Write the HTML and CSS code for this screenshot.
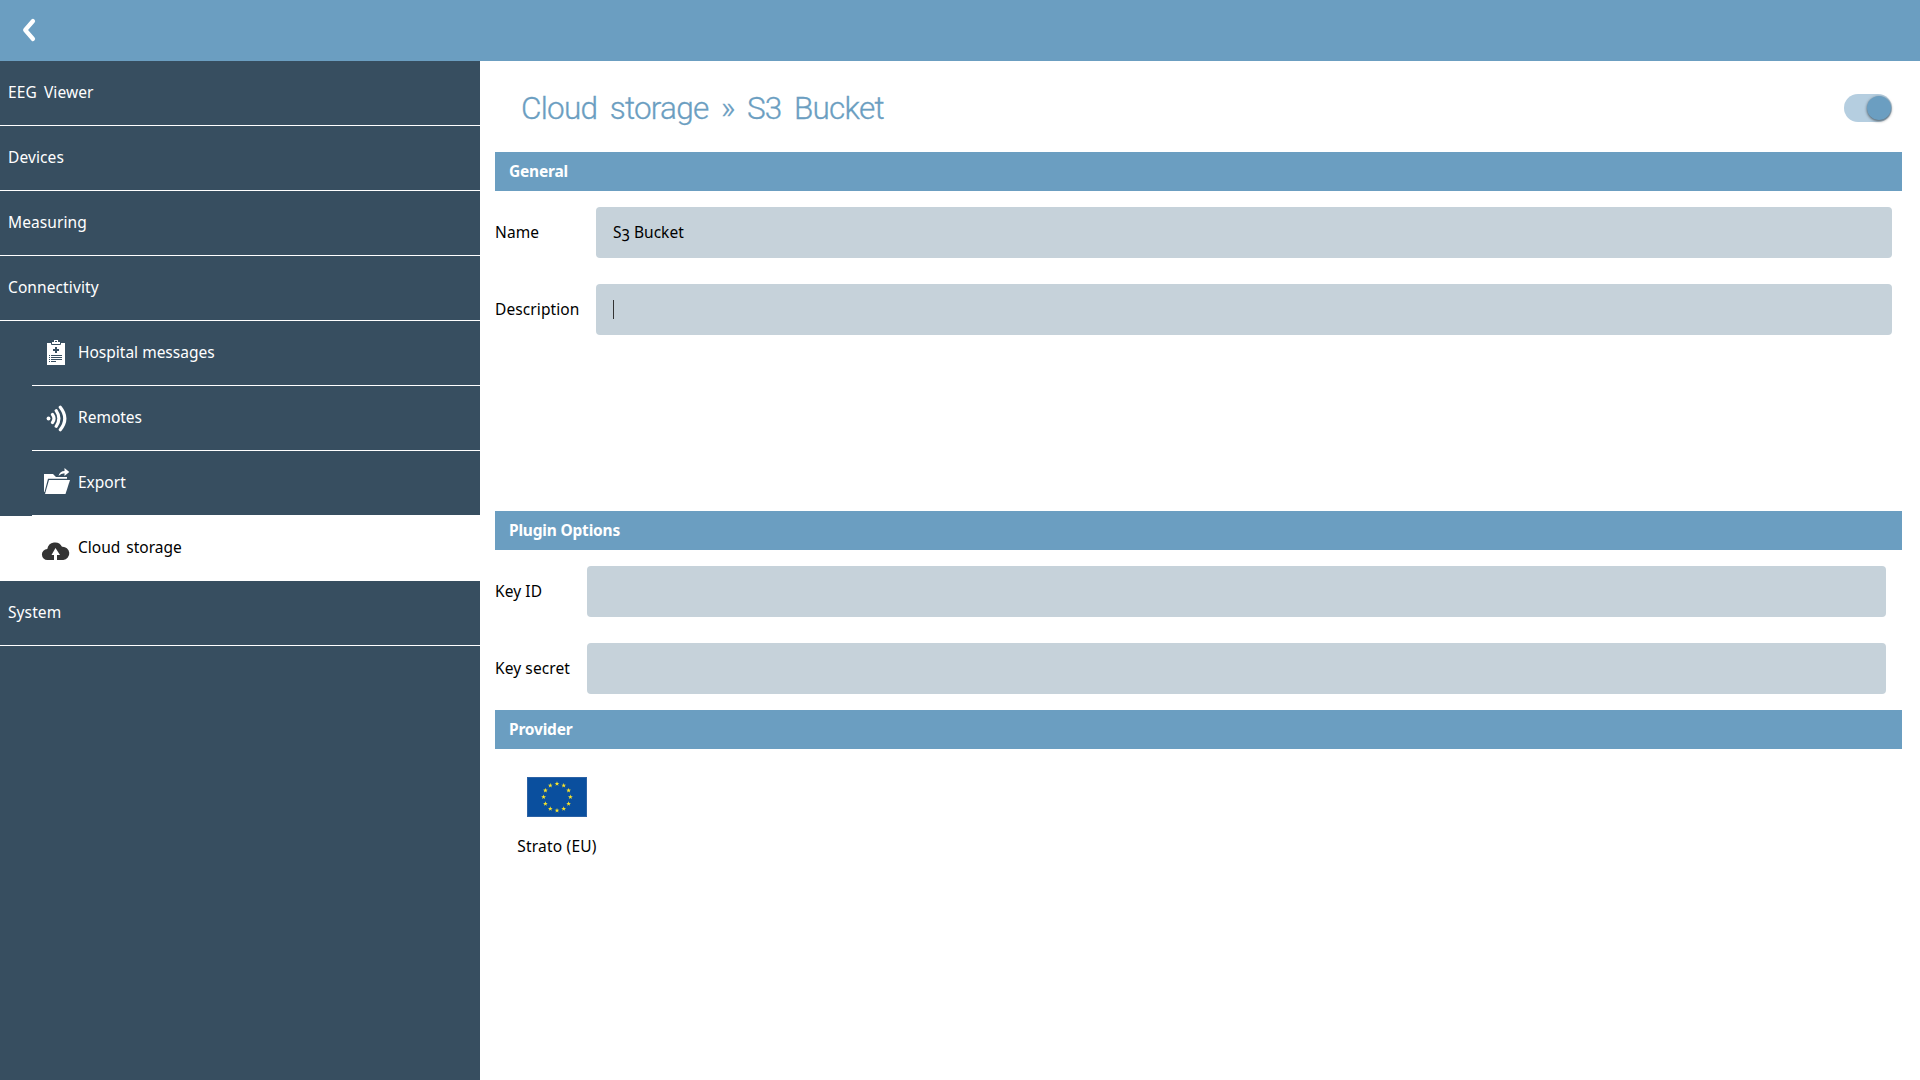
FILE: index.html
```
<!DOCTYPE html>
<html lang="en">
    <head>
        <meta charset="UTF-8">
        <title>Cloud storage</title>
        <link rel="stylesheet" href="styles.css">
    </head>
    <body>
        <header class="topbar">
            <svg class="back" width="16" height="26" viewBox="0 0 16 26">
                <path d="M12 4 L4.200 13 L12 22" fill="none" stroke="#fff" stroke-width="4.200" stroke-linecap="round" stroke-linejoin="round"/>
            </svg>
        </header>
        <div class="layout">
            <ul class="menu">
                <li>EEG Viewer</li>
                <li>Devices</li>
                <li>Measuring</li>
                <li>Connectivity</li>
                <li class="sub">
                    <div class="sub-item">
                        <svg class="icon" width="30" height="30" viewBox="0 0 30 30">
                            <path d="M6 6h5V5h2V3h4v2h2v1h5v22H6z" fill="#fff"/>
                            <path d="M10.500 6v1.500h9V6M14 4.500h2" fill="none" stroke="#374e60"/>
                            <path d="M15 10v6M12 13h6" stroke="#374e60" stroke-width="2"/>
                            <path d="M8 18.500h1M10 18.500h11M8 20.500h1M10 20.500h11M8 22.500h1M10 22.500h11M8 24.500h1M10 24.500h5" stroke="#374e60"/>
                        </svg>
                        <span>Hospital messages</span>
                    </div>
                </li>
                <li class="sub">
                    <div class="sub-item">
                        <svg class="icon" width="30" height="30" viewBox="0 0 30 30">
                            <circle cx="7.500" cy="16.500" r="1.900" fill="#fff"/>
                            <path d="M11.500 12.500q3 4 0 8M15.200 8.700q5.400 7.800 0 15.600M19.300 5.300q9 11.200 0 22.400" fill="none" stroke="#fff" stroke-width="3.200" stroke-linecap="round"/>
                        </svg>
                        <span>Remotes</span>
                    </div>
                </li>
                <li class="sub">
                    <div class="sub-item">
                        <svg class="icon" width="30" height="30" viewBox="0 0 30 30">
                            <path d="M3 7h9l3 3h11v1.700H7L3.500 25H3z" fill="#fff"/>
                            <path d="M8 13h21l-4.500 14H4z" fill="#fff"/>
                            <path d="M17.500 9q1.500-5 6-5V1l4.800 4-4.800 4V6.200q-3.500 0-6 2.800z" fill="#fff"/>
                        </svg>
                        <span>Export</span>
                    </div>
                </li>
                <li class="sub active">
                    <div class="sub-item">
                        <svg class="icon" width="30" height="30" viewBox="0 0 30 30">
                            <path d="M6.500 28A5.500 5.500 0 0 1 6.300 17 7.800 7.800 0 0 1 21 14.800 6.600 6.600 0 0 1 22.300 28H16V23H19L14.500 16 10.500 23H13V28z" fill="#333"/>
                        </svg>
                        <span>Cloud storage</span>
                    </div>
                </li>
                <li>System</li>
            </ul>
            <main class="content">
                <div class="heading">
                    <h1>Cloud storage » S3 Bucket</h1>
                    <div class="toggle"><div class="knob"></div></div>
                </div>
                <h2>General</h2>
                <div class="fields general">
                    <label>Name</label>
                    <div class="field">S3 Bucket</div>
                    <label>Description</label>
                    <div class="field"><span class="caret"></span></div>
                </div>
                <h2>Plugin Options</h2>
                <div class="fields plugin">
                    <label>Key ID</label>
                    <div class="field"></div>
                    <label>Key secret</label>
                    <div class="field"></div>
                </div>
                <h2>Provider</h2>
                <div class="provider">
                    <svg class="flag" width="60" height="40" viewBox="0 0 60 40">
                        <defs>
                            <path id="star" fill="#f8e32b" d="M0-2.500L.6-.8 2.400-.77 .95.300 1.500 2 0 1-1.500 2-.95.300-2.400-.77-.6-.8z"/>
                        </defs>
                        <rect width="60" height="40" fill="#2c62a5"/>
                        <rect x="1" y="1" width="58" height="38" fill="#0a4f9e"/>
                        <use href="#star" x="30" y="6.700"/>
                        <use href="#star" x="36.700" y="8.500"/>
                        <use href="#star" x="41.600" y="13.400"/>
                        <use href="#star" x="43.400" y="20.100"/>
                        <use href="#star" x="41.600" y="26.800"/>
                        <use href="#star" x="36.700" y="31.700"/>
                        <use href="#star" x="30" y="33.500"/>
                        <use href="#star" x="23.300" y="31.700"/>
                        <use href="#star" x="18.400" y="26.800"/>
                        <use href="#star" x="16.600" y="20.100"/>
                        <use href="#star" x="18.400" y="13.400"/>
                        <use href="#star" x="23.300" y="8.500"/>
                    </svg>
                    <span>Strato (EU)</span>
                </div>
            </main>
        </div>
    </body>
</html>
```
FILE: styles.css
```
body, ul, h1, h2 {
    margin: 0;
    padding: 0;
}

body {
    height: 1080px;
    overflow: hidden;
    font-family: "Noto Sans", "Open Sans", sans-serif;
    font-size: 15.5px;
    color: #000;
    background-color: #fff;
}

.topbar {
    display: flex;
    align-items: center;
    height: 61px;
    padding: 0 0 1px 21px;
    box-sizing: border-box;
    background-color: #6b9ec1;
}

.layout {
    display: flex;
    height: 1019px;
}

.menu {
    width: 480px;
    list-style: none;
    color: #fff;
    background-color: #374e60;
}

.menu li {
    height: 65px;
    padding-left: 8px;
    box-sizing: border-box;
    line-height: 63px;
    letter-spacing: 0.1px;
    word-spacing: 3px;
    border-bottom: 1px solid #fff;
}

.menu .sub {
    padding-left: 32px;
    letter-spacing: normal;
    word-spacing: normal;
    border-bottom: none;
}

.sub-item {
    display: flex;
    align-items: center;
    height: 65px;
    padding: 0 0 2px 9px;
    box-sizing: border-box;
    border-bottom: 1px solid #fff;
}

.icon {
    margin-right: 7px;
}

.menu .active {
    color: #000;
    word-spacing: 2px;
    background-color: #fff;
}

.content {
    flex: 1;
    padding: 0 18px 0 15px;
}

.heading {
    display: flex;
    justify-content: space-between;
    align-items: center;
    height: 91px;
    padding: 2px 10px 0 26px;
    box-sizing: border-box;
}

h1 {
    padding-top: 2px;
    font-family: Roboto, sans-serif;
    font-size: 31.5px;
    font-weight: 300;
    letter-spacing: -0.75px;
    word-spacing: 5.5px;
    color: #6b9ec1;
    -webkit-text-stroke: 0.3px #6b9ec1;
}

.toggle {
    display: flex;
    justify-content: flex-end;
    align-items: center;
    width: 48px;
    height: 28px;
    padding-right: 1px;
    box-sizing: border-box;
    border-radius: 14px;
    background-color: #b5cee0;
}

.knob {
    width: 24px;
    height: 24px;
    border-radius: 50%;
    background-color: #6b9ec1;
    box-shadow: 0 1px 3px rgba(0, 0, 0, 0.6);
}

h2 {
    height: 39px;
    padding-left: 14px;
    font-size: 15.5px;
    line-height: 38px;
    letter-spacing: -0.2px;
    color: #fff;
    background-color: #6b9ec1;
}

.fields {
    display: grid;
    row-gap: 26px;
    align-content: start;
    align-items: center;
    padding-top: 16px;
    box-sizing: border-box;
}

.fields label {
    padding-bottom: 1px;
    letter-spacing: 0.1px;
}

.general {
    grid-template-columns: 101px 1fr;
    height: 320px;
    padding-right: 10px;
}

.plugin {
    grid-template-columns: 92px 1fr;
    height: 160px;
    padding-right: 16px;
}

.field {
    display: flex;
    align-items: center;
    height: 51px;
    padding: 0 0 1px 17px;
    box-sizing: border-box;
    border-radius: 4px;
    font-variant-numeric: oldstyle-nums;
    background-color: #c6d2da;
}

.caret {
    width: 1px;
    height: 19px;
    background-color: #333;
}

.provider {
    display: flex;
    flex-direction: column;
    align-items: center;
    width: 124px;
    padding-top: 28px;
    letter-spacing: 0.2px;
}

.flag {
    margin-bottom: 18px;
}
```
